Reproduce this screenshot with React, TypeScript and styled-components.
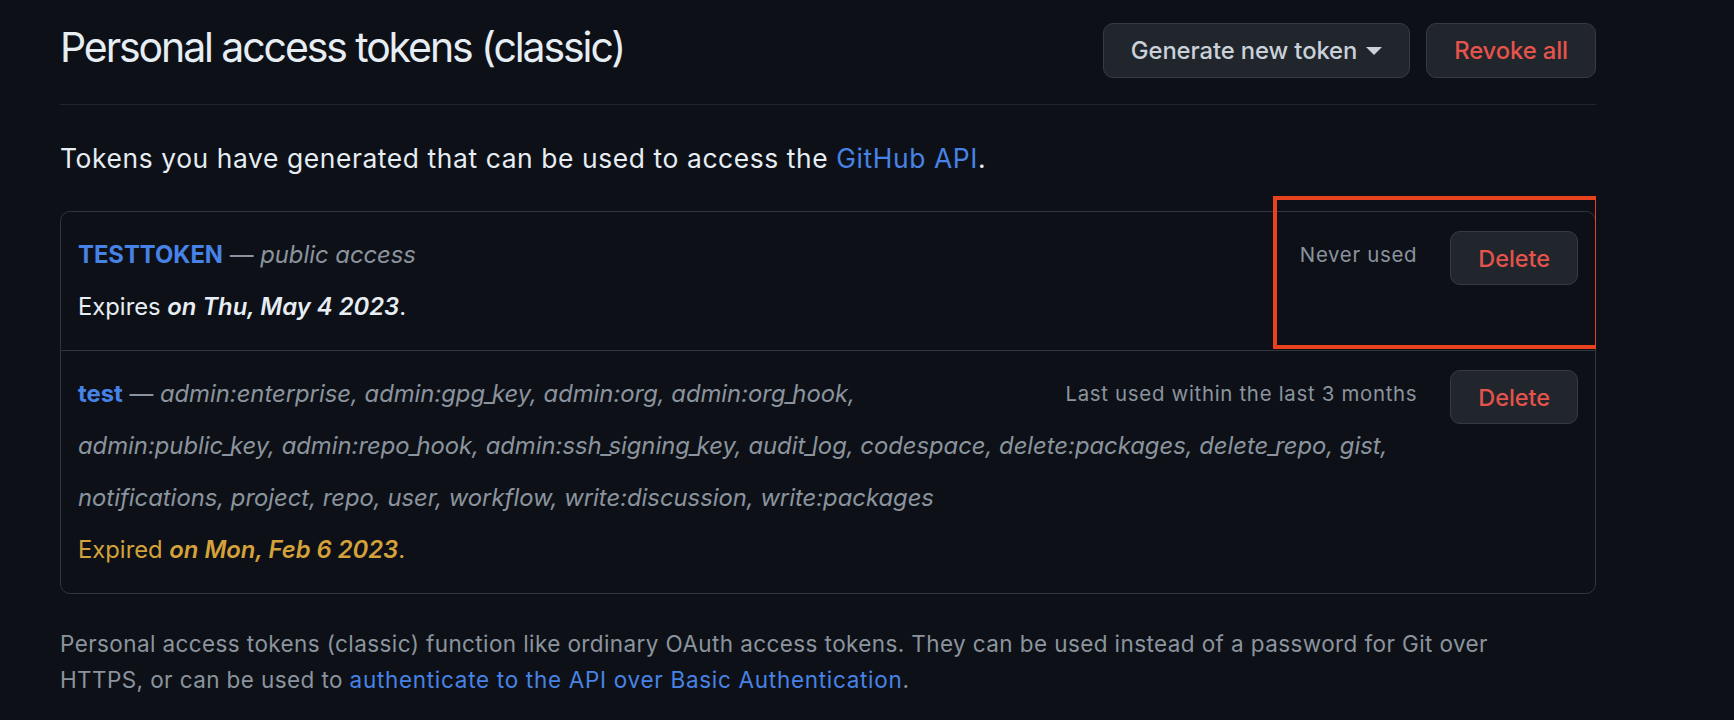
import React from 'react';
import styled, { createGlobalStyle } from 'styled-components';

const GlobalStyle = createGlobalStyle`
  html, body {
    margin: 0;
    padding: 0;
    background: #0d1117;
  }
  body {
    font-family: Inter, 'Noto Sans', 'Liberation Sans', sans-serif;
    color: #e6edf3;
  }
`

const Page = styled.div`
  box-sizing: border-box;
  width: 1536px;
  margin-left: 60px;
  height: 720px;
  overflow: hidden;
`

const Header = styled.div`
  display: flex;
  justify-content: space-between;
  align-items: flex-start;
  padding: 18px 0 26px;
  border-bottom: 1px solid #21262d;
`

const Title = styled.h2`
  margin: 4px 0 0;
  font-size: 41px;
  font-weight: 400;
  line-height: 51px;
  letter-spacing: -2.1px;
  color: #e6edf3;
`

const Actions = styled.div`
  display: flex;
  gap: 16px;
  margin-top: 5px;
`

const Button = styled.button<{ danger?: boolean }>`
  box-sizing: border-box;
  display: inline-flex;
  align-items: center;
  height: 55px;
  padding: 0 27px;
  background: #21262d;
  border: 1px solid #363b42;
  border-radius: 10px;
  font-family: inherit;
  font-size: 23.8px;
  font-weight: 500;
  letter-spacing: -0.1px;
  color: ${(props) => (props.danger ? '#e5534b' : '#c9d1d9')};
  cursor: pointer;
`

const Caret = styled.span`
  width: 0;
  height: 0;
  margin-left: 9px;
  border-left: 8px solid transparent;
  border-right: 8px solid transparent;
  border-top: 8px solid #c9d1d9;
`

const Intro = styled.p`
  margin: 33px 0 33px;
  font-size: 26.4px;
  line-height: 40px;
  letter-spacing: 0.6px;
  color: #e6edf3;
`

const Link = styled.a<{ wide?: boolean }>`
  color: #4783e6;
  text-decoration: none;
  letter-spacing: ${(props) => (props.wide ? '0.7px' : 'inherit')};
`

const Card = styled.div`
  position: relative;
  border: 1px solid #30363d;
  border-radius: 10px;
`

const Row = styled.div<{ last?: boolean }>`
  padding: 17px;
  border-bottom: ${(props) => (props.last ? 'none' : '1px solid #30363d')};
  font-size: 23.8px;
  line-height: 52px;
  letter-spacing: 0;
  &::after {
    content: '';
    display: block;
    clear: both;
  }
`

const DeleteButton = styled(Button)`
  float: right;
  height: 54px;
  margin: 2px 0 0 33px;
  font-size: 23.4px;
  letter-spacing: 0;
`

const LastUsed = styled.span`
  float: right;
  margin-left: 16px;
  font-size: 20.4px;
  line-height: 52px;
  letter-spacing: 0.7px;
  color: #8b949e;
`

const Line = styled.div<{ expired?: boolean }>`
  color: ${(props) => (props.expired ? '#d4a13a' : '#e6edf3')};
`

const TokenName = styled.strong`
  color: #4783e6;
  font-weight: 700;
`

const Muted = styled.span`
  color: #8b949e;
`

const Scopes = styled.em`
  color: #8b949e;
`

// Inter's underscore is much wider than the original system font's
const Underscore = styled.span`
  letter-spacing: -4px;
`

const Date = styled.em`
  font-weight: 600;
`

const Highlight = styled.div`
  position: absolute;
  top: -16px;
  right: -4px;
  width: 326px;
  height: 153px;
  box-sizing: border-box;
  border: 4px solid #e8421f;
  pointer-events: none;
`

const Note = styled.p`
  max-width: 1480px;
  margin: 32px 0 0;
  font-size: 22.5px;
  line-height: 36px;
  letter-spacing: 0.4px;
  color: #8b949e;
`

const scopes = [
  'admin:enterprise', 'admin:gpg_key', 'admin:org', 'admin:org_hook', 'admin:public_key',
  'admin:repo_hook', 'admin:ssh_signing_key', 'audit_log', 'codespace', 'delete:packages',
  'delete_repo', 'gist', 'notifications', 'project', 'repo', 'user', 'workflow',
  'write:discussion', 'write:packages',
]

const renderScope = (scope: string) => {
  const parts = scope.split('_')
  return parts.map((part, i) => (
    <React.Fragment key={i}>
      {part}
      {i < parts.length - 1 ? <Underscore>_</Underscore> : null}
    </React.Fragment>
  ))
}

export default function App() {
  return (
    <Page>
      <GlobalStyle />
      <Header>
        <Title>Personal access tokens (classic)</Title>
        <Actions>
          <Button>
            Generate new token
            <Caret />
          </Button>
          <Button danger>Revoke all</Button>
        </Actions>
      </Header>
      <Intro>
        Tokens you have generated that can be used to access the <Link href="#">GitHub API</Link>.
      </Intro>
      <Card>
        <Row>
          <DeleteButton danger>Delete</DeleteButton>
          <LastUsed>Never used</LastUsed>
          <Line>
            <TokenName>TESTTOKEN</TokenName> <Muted>— <em>public access</em></Muted>
          </Line>
          <Line>
            Expires <Date>on Thu, May 4 2023</Date>.
          </Line>
        </Row>
        <Row last>
          <DeleteButton danger>Delete</DeleteButton>
          <LastUsed>Last used within the last 3 months</LastUsed>
          <Line>
            <TokenName>test</TokenName> <Muted>—</Muted>{' '}
            <Scopes>
              {scopes.map((scope, i) => (
                <React.Fragment key={scope}>
                  {renderScope(scope)}
                  {i < scopes.length - 1 ? ', ' : ''}
                </React.Fragment>
              ))}
            </Scopes>
          </Line>
          <Line expired>
            Expired <Date>on Mon, Feb 6 2023</Date>.
          </Line>
        </Row>
        <Highlight />
      </Card>
      <Note>
        Personal access tokens (classic) function like ordinary OAuth access tokens. They can be used instead of a password for Git over
        HTTPS, or can be used to <Link wide href="#">authenticate to the API over Basic Authentication</Link>.
      </Note>
    </Page>
  );
}
